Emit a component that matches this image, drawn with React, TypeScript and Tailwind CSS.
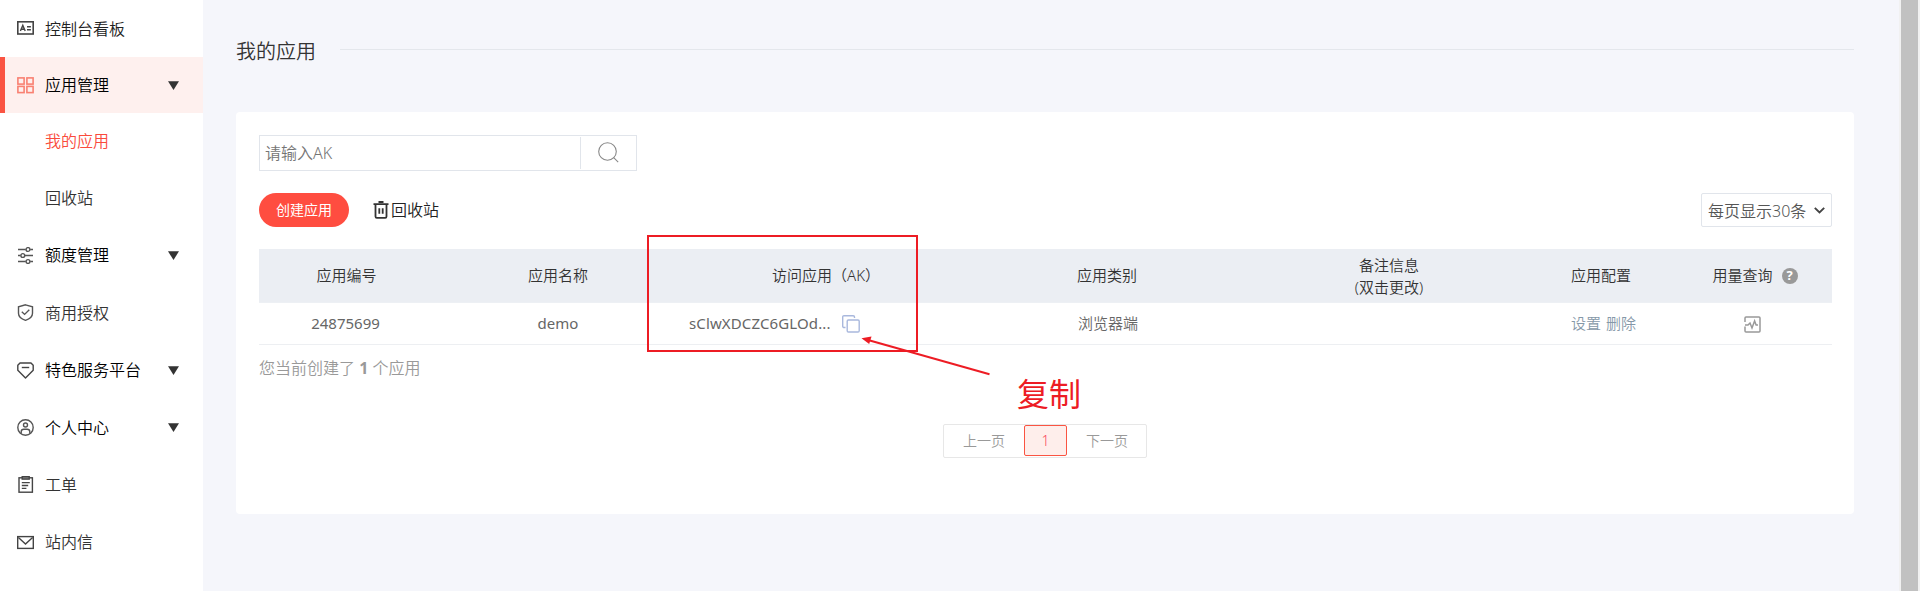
import React from "react";

type IconProps = { children: React.ReactNode; className?: string };

function Icon({ children, className = "" }: IconProps) {
  return (
    <svg
      viewBox="0 0 17 17"
      fill="none"
      stroke="currentColor"
      strokeWidth="1.4"
      className={`h-[17px] w-[17px] shrink-0 ${className}`}
    >
      {children}
    </svg>
  );
}

const icons = {
  board: (
    <Icon className="text-[#444]">
      <rect x="0.8" y="1.8" width="15.4" height="12.2" strokeWidth="1.6" />
      <path d="M3.4 11 5.8 5.400 8.200 11M4.300 9.300h3M10 6.800h3.900M10 9.800h3.900" />
    </Icon>
  ),
  apps: (
    <Icon className="text-[#f98172]">
      <rect x="0.9" y="0.9" width="6.2" height="6.2" strokeWidth="1.6" />
      <rect x="9.9" y="0.9" width="6.2" height="6.2" strokeWidth="1.6" />
      <rect x="0.9" y="9.4" width="6.2" height="6.2" strokeWidth="1.6" />
      <rect x="9.9" y="9.4" width="6.2" height="6.2" strokeWidth="1.6" />
    </Icon>
  ),
  quota: (
    <Icon className="text-[#555]">
      <path d="M1 2.5h7.800M13.200 2.500h2.800M1 8.500h2.600M8 8.500h8M1 14.500h7.800M13.200 14.500h2.800" />
      <circle cx="11" cy="2.5" r="1.9" />
      <circle cx="5.8" cy="8.5" r="1.9" />
      <circle cx="11" cy="14.5" r="1.9" />
    </Icon>
  ),
  shield: (
    <Icon className="text-[#555]">
      <path d="M8.5 0.8 15.500 2.800v6.400c0 3.400-3 5.800-7 7.100-4-1.300-7-3.700-7-7.100V2.800z" />
      <path d="m4.800 7.800 2.800 2.600 4.700-4.600" />
    </Icon>
  ),
  gem: (
    <Icon className="text-[#444]">
      <path d="M3 1h11l2.200 2.300v5L8.500 16 .8 8.300v-5z" strokeLinejoin="round" />
      <path d="M4.800 5.500h7.400" />
    </Icon>
  ),
  user: (
    <Icon className="text-[#555]">
      <circle cx="8.5" cy="8.5" r="7.7" />
      <circle cx="8.5" cy="6" r="2" />
      <path d="M4.200 14.400v-1.600c0-1.600 1-2.600 2.600-2.600h3.400c1.600 0 2.600 1 2.600 2.600v1.600" />
    </Icon>
  ),
  ticket: (
    <Icon className="text-[#444]">
      <rect x="2" y="1.8" width="13.4" height="14.4" />
      <rect x="5.2" y="0.7" width="7" height="2.400" fill="#888" />
      <path d="M4.800 6.600h8M4.800 9.500h6.400M4.800 12.400h4.600" />
    </Icon>
  ),
  mail: (
    <Icon className="text-[#444]">
      <rect x="0.7" y="2.600" width="15.600" height="11.800" />
      <path d="m1.400 3.400 7.100 6.600 7.100-6.600" />
    </Icon>
  ),
};

type NavItemProps = {
  label: string;
  icon?: React.ReactNode;
  arrow?: boolean;
  className: string;
};

function NavItem({ label, icon, arrow, className }: NavItemProps) {
  return (
    <li className={`flex items-center pr-6 ${className}`}>
      <span className="flex w-7 shrink-0">{icon}</span>
      <span className="flex-1 whitespace-nowrap">{label}</span>
      {arrow && (
        <svg viewBox="0 0 11 9" className="h-[9px] w-[11px] fill-[#333]">
          <path d="M0 0.3h11L5.5 9z" />
        </svg>
      )}
    </li>
  );
}

function Sidebar() {
  return (
    <aside className="w-[203px] shrink-0 bg-white text-base leading-6">
      <ul>
        <NavItem className="h-[57px] pl-[17px] text-[#222]" label="控制台看板" icon={icons.board} />
        <NavItem
          className="h-14 border-l-[5px] border-[#fa5442] bg-[#fef0ee] pl-3 text-black"
          label="应用管理"
          icon={icons.apps}
          arrow
        />
        <NavItem className="h-14 pl-[17px] text-[#fa4b3c]" label="我的应用" />
        <NavItem className="h-[57px] pl-[17px] text-[#333]" label="回收站" />
        <NavItem className="h-[58px] pl-[17px] text-black" label="额度管理" icon={icons.quota} arrow />
        <NavItem className="h-[57px] pl-[17px] text-[#333]" label="商用授权" icon={icons.shield} />
        <NavItem className="h-[58px] pl-[17px] text-black" label="特色服务平台" icon={icons.gem} arrow />
        <NavItem className="h-[57px] pl-[17px] text-black" label="个人中心" icon={icons.user} arrow />
        <NavItem className="h-[57px] pl-[17px] text-[#333]" label="工单" icon={icons.ticket} />
        <NavItem className="h-[58px] pl-[17px] text-[#333]" label="站内信" icon={icons.mail} />
      </ul>
    </aside>
  );
}

function SearchBox() {
  return (
    <div className="flex h-9 w-[378px] items-center border border-[#e1e5eb]">
      <span className="flex-1 pl-[5px] text-base text-[#757575]">请输入AK</span>
      <button className="flex h-8 w-[56px] items-center justify-center border-l border-[#e1e5eb] pb-0.5">
        <svg viewBox="0 0 21 21" className="h-[21px] w-[21px]" fill="none" stroke="#888" strokeWidth="1.1">
          <circle cx="9.5" cy="9.5" r="8.8" />
          <path d="m15.7 15.7 4.5 4.5" />
        </svg>
      </button>
    </div>
  );
}

function Toolbar() {
  return (
    <div className="mt-[22px] flex h-[34px] items-center">
      <button className="h-[34px] w-[90px] rounded-full bg-[#ff4d40] text-sm font-normal text-white">创建应用</button>
      <a className="ml-6 flex items-center text-base text-[#222]">
        <svg viewBox="0 0 16 18" className="mr-0.5 h-[18px] w-4" fill="none" stroke="#333" strokeWidth="1.8">
          <path d="M0.5 3.200h15M5.500 1h5M2.500 3.200v12.300c0 .8.500 1.300 1.300 1.300h8.400c.8 0 1.300-.5 1.300-1.300V3.200M6.300 7.300v5.400M9.700 7.300v5.400" />
        </svg>
        回收站
      </a>
      <div className="ml-auto flex h-[34px] w-[131px] items-center justify-between rounded-xs border border-[#e1e5eb] pl-1.5 pr-1.5 text-base text-[#555]">
        <span className="whitespace-nowrap pt-px">每页显示30条</span>
        <svg viewBox="0 0 11 7" className="h-[7px] w-[11px]" fill="none" stroke="#444" strokeWidth="1.9">
          <path d="m0.8 0.9 4.7 4.6 4.7-4.6" />
        </svg>
      </div>
    </div>
  );
}

const columns = "grid grid-cols-[175px_248px_288px_274px_290px_134px_164px] items-center justify-items-center";

function AppTable() {
  return (
    <div className="mt-[22px] text-[15px]">
      <div className={`${columns} h-[54px] border-b border-[#edf0f4] bg-[#ebeef3] text-[#333]`}>
        <span>应用编号</span>
        <span>应用名称</span>
        <span>访问应用（AK）</span>
        <span>应用类别</span>
        <span className="text-center leading-[22px]">
          备注信息
          <br />
          (双击更改)
        </span>
        <span>应用配置</span>
        <span className="flex items-center gap-[9px] pl-2.5">
          用量查询
          <span className="flex h-4 w-4 items-center justify-center rounded-full bg-[#999] text-[13px] font-bold text-white">
            ?
          </span>
        </span>
      </div>
      <div className={`${columns} h-[42px] border-b border-[#edeff2] text-[#666]`}>
        <span className="pr-0.5 font-normal">24875699</span>
        <span className="font-normal">demo</span>
        <span className="flex w-full items-center gap-3 pl-[7px]">
          <span className="w-[141px] font-normal tracking-[0.12px] whitespace-nowrap">sClwXDCZC6GLOd...</span>
          <svg viewBox="0 0 18 18" className="h-[18px] w-[18px]" fill="none" stroke="#a9b8dd" strokeWidth="1.4">
            <path d="M3.5 12.5H2.2C1.300 12.500.7 12 .7 11.200V2C.7 1.200 1.200.7 2 .7h9.200c.8 0 1.300.5 1.300 1.300v1" />
            <rect x="5.2" y="5" width="12" height="12" rx="1.200" />
          </svg>
        </span>
        <span className="pl-0.5">浏览器端</span>
        <span />
        <span className="pl-[5px] text-[#8598a8] [word-spacing:1px]">设置 删除</span>
        <svg viewBox="0 0 17 17" className="mt-0.5 ml-1 h-[17px] w-[17px]" fill="none" stroke="#999" strokeWidth="1.5">
          <path d="M1 6V2c0-.6.4-1 1-1h13c.6 0 1 .4 1 1v13c0 .6-.4 1-1 1H2c-.6 0-1-.4-1-1v-4.500" />
          <path d="M1 9h3l2-2 2 5 2.600-7 1.500 4H14" />
        </svg>
      </div>
    </div>
  );
}

function Pagination() {
  return (
    <div className="mt-11 ml-[684px] flex h-[34px] w-[204px] rounded-xs border border-[#e7e7e7] text-sm leading-[31px] text-[#999]">
      <span className="w-20 pl-[19px]">上一页</span>
      <span className="h-[31px] w-[43px] rounded-xs border border-[#fa5442] bg-[#feeeeb] text-center leading-[29px] text-[#fa4b5c]">
        1
      </span>
      <span className="pl-[19px]">下一页</span>
    </div>
  );
}

function Annotation() {
  return (
    <div className="pointer-events-none absolute inset-0 text-[#ed1c24]">
      <div className="absolute top-[235px] left-[647px] h-[117px] w-[271px] border-2 border-[#ed1c24]" />
      <svg viewBox="0 0 132 42" className="absolute top-[335px] left-[860px] h-[42px] w-[132px]">
        <path d="m8 5 121.500 34.200" stroke="currentColor" strokeWidth="2" />
        <path d="M1.500 3.200 11.500 1.400 9.200 9z" fill="currentColor" />
      </svg>
      <span className="absolute top-[370px] left-[1017px] text-[32px] leading-12 font-normal whitespace-nowrap">复制</span>
    </div>
  );
}

export default function App() {
  return (
    <div className="relative flex h-[591px] w-full overflow-hidden bg-[#f5f6fb] font-['Noto_Sans','Noto_Sans_CJK_SC',sans-serif] font-[350]">
      <Sidebar />
      <main className="flex-1 pl-[33px]">
        <div className="flex h-[112px] w-[1618px] items-start pt-[37px]">
          <h1 className="w-[104px] text-xl leading-[30px] font-[350] text-[#333]">我的应用</h1>
          <div className="mt-3 h-px flex-1 bg-[#e4e7ec]" />
        </div>
        <section className="h-[402px] w-[1618px] rounded-sm bg-white pt-[23px] pr-[22px] pl-[23px]">
          <SearchBox />
          <Toolbar />
          <AppTable />
          <p className="mt-[11px] text-base leading-6 text-[#999]">
            您当前创建了 <b>1</b> 个应用
          </p>
          <Pagination />
        </section>
      </main>
      <div className="w-[21px] border-r-2 border-l-2 border-[#f1f1f1] bg-[#c1c1c1]" />
      <Annotation />
    </div>
  );
}
